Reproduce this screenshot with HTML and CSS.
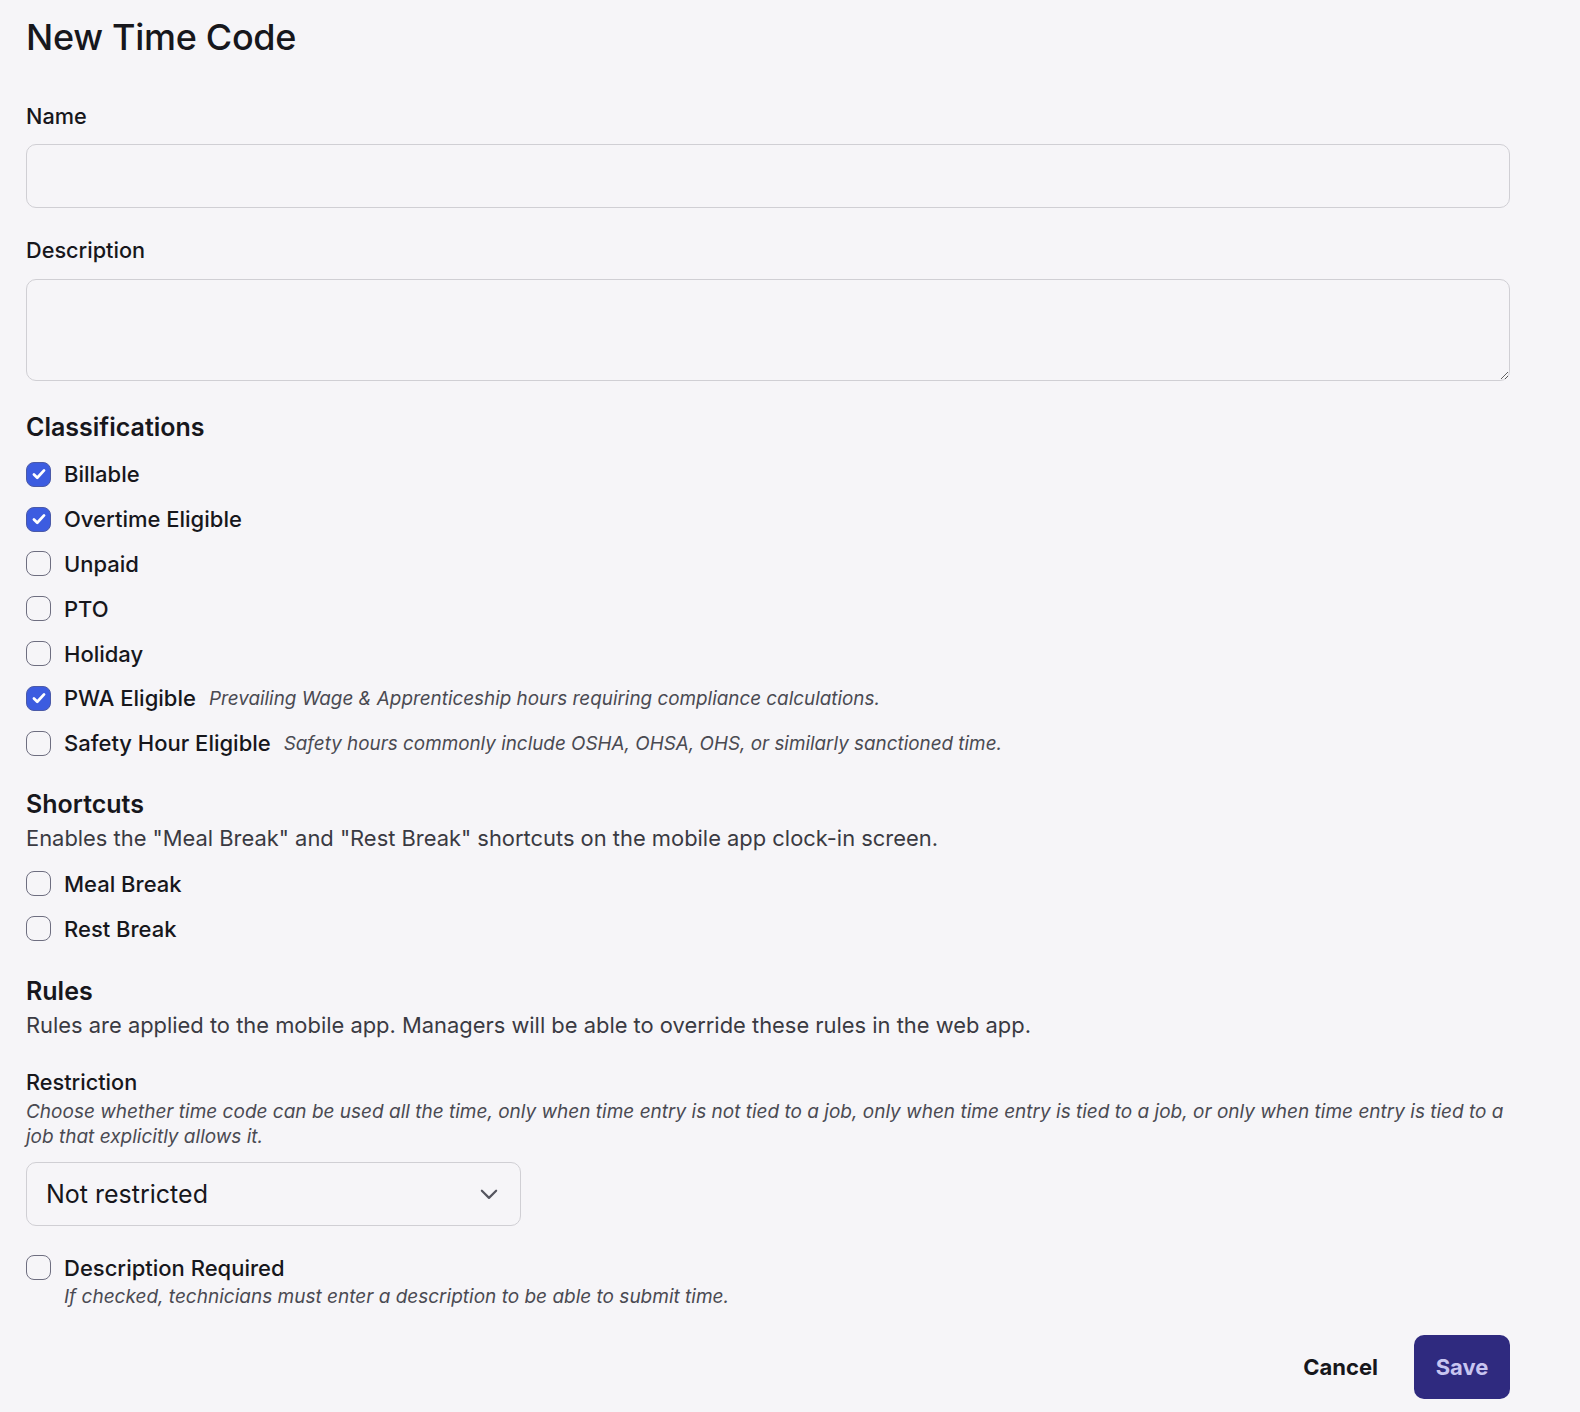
FILE: index.html
```
<!DOCTYPE html>
<html>
<head>
  <meta charset="UTF-8">
  <title>New Time Code</title>
  <link rel="stylesheet" href="styles.css">
</head>
<body>
  <div class="page">
    <h1>New Time Code</h1>

    <label class="field-label label-name" for="name">Name</label>
    <input class="text-input" type="text" id="name">

    <label class="field-label label-desc" for="desc">Description</label>
    <textarea class="text-area" id="desc"></textarea>

    <h2 class="section classifications">Classifications</h2>
    <div class="checks">
      <div class="check-row"><span class="box checked"><svg viewBox="0 0 24 24"><path d="M6.5 12.5l3.6 3.6 7.4-8"/></svg></span><span class="check-label">Billable</span></div>
      <div class="check-row"><span class="box checked"><svg viewBox="0 0 24 24"><path d="M6.5 12.5l3.6 3.6 7.4-8"/></svg></span><span class="check-label">Overtime Eligible</span></div>
      <div class="check-row"><span class="box"></span><span class="check-label">Unpaid</span></div>
      <div class="check-row"><span class="box"></span><span class="check-label">PTO</span></div>
      <div class="check-row"><span class="box"></span><span class="check-label">Holiday</span></div>
      <div class="check-row"><span class="box checked"><svg viewBox="0 0 24 24"><path d="M6.5 12.5l3.6 3.6 7.4-8"/></svg></span><span class="check-label">PWA Eligible</span><span class="hint">Prevailing Wage &amp; Apprenticeship hours requiring compliance calculations.</span></div>
      <div class="check-row"><span class="box"></span><span class="check-label">Safety Hour Eligible</span><span class="hint">Safety hours commonly include OSHA, OHSA, OHS, or similarly sanctioned time.</span></div>
    </div>

    <h2 class="section shortcuts">Shortcuts</h2>
    <p class="section-text">Enables the "Meal Break" and "Rest Break" shortcuts on the mobile app clock-in screen.</p>
    <div class="checks short-checks">
      <div class="check-row"><span class="box"></span><span class="check-label">Meal Break</span></div>
      <div class="check-row"><span class="box"></span><span class="check-label">Rest Break</span></div>
    </div>

    <h2 class="section rules">Rules</h2>
    <p class="section-text">Rules are applied to the mobile app. Managers will be able to override these rules in the web app.</p>

    <div class="field-label label-restr">Restriction</div>
    <p class="help">Choose whether time code can be used all the time, only when time entry is not tied to a job, only when time entry is tied to a job, or only when time entry is tied to a job that explicitly allows it.</p>
    <div class="select">
      <span>Not restricted</span>
      <svg class="chevron" viewBox="0 0 20 20"><path d="M3.5 7l6.5 6.5L16.5 7"/></svg>
    </div>

    <div class="req-row">
      <span class="box"></span>
      <div>
        <div class="check-label">Description Required</div>
        <div class="req-help">If checked, technicians must enter a description to be able to submit time.</div>
      </div>
    </div>

    <div class="actions">
      <button class="btn-cancel">Cancel</button>
      <button class="btn-save">Save</button>
    </div>
  </div>
</body>
</html>
```

FILE: styles.css
```
body {
  margin: 0;
  background-color: #f6f5f8;
  font-family: Inter, "Noto Sans", sans-serif;
  color: #17171c;
}
.page {
  padding: 15px 70px 0 26px;
}
h1 {
  margin: 0;
  font-size: 36px;
  line-height: 44px;
  font-weight: 500;
  letter-spacing: -0.3px;
}
.field-label {
  display: block;
  font-size: 21.7px;
  line-height: 28px;
  font-weight: 500;
}
.label-name {
  margin-top: 43px;
}
.label-desc {
  margin-top: 28px;
}
.text-input,
.text-area {
  display: block;
  box-sizing: border-box;
  width: 100%;
  margin: 14px 0 0;
  border: 1.5px solid #d0cfd4;
  border-radius: 10px;
  background-color: #f6f5f8;
  font-family: inherit;
  font-size: 21px;
}
.text-input {
  height: 64px;
}
.text-area {
  height: 102px;
  margin-top: 15px;
  resize: vertical;
}
.section {
  margin: 0;
  font-size: 25px;
  line-height: 32px;
  font-weight: 600;
}
.classifications {
  margin-top: 30px;
}
.shortcuts {
  margin-top: 22px;
}
.rules {
  margin-top: 24px;
}
.section-text {
  margin: 4px 0 0;
  font-size: 21.9px;
  line-height: 28px;
  color: #3a3a42;
}
.checks {
  margin-top: 9px;
}
.short-checks {
  margin-top: 10px;
}
.check-row {
  display: flex;
  align-items: center;
  height: 44.8px;
}
.box {
  box-sizing: border-box;
  flex: none;
  width: 25px;
  height: 25px;
  border: 1.5px solid #6e6e80;
  border-radius: 8px;
  margin-right: 13px;
  display: flex;
  align-items: center;
  justify-content: center;
}
.box.checked {
  background-color: #3c5ce0;
  border-color: #4b5aa8;
}
.box svg {
  width: 22px;
  height: 22px;
  fill: none;
  stroke: #fff;
  stroke-width: 3;
  stroke-linecap: round;
  stroke-linejoin: round;
}
.check-label {
  font-size: 22px;
  line-height: 28px;
  font-weight: 500;
}
.hint {
  margin-left: 13px;
  font-size: 18.85px;
  font-style: italic;
  color: #4a4a52;
}
.label-restr {
  margin-top: 29px;
}
.help {
  margin: 3px 0 0;
  font-size: 19px;
  line-height: 25px;
  font-style: italic;
  color: #4a4a52;
}
.select {
  box-sizing: border-box;
  width: 495px;
  height: 64px;
  margin-top: 13px;
  padding: 0 20px 0 19px;
  border: 1.5px solid #d0cfd4;
  border-radius: 10px;
  display: flex;
  align-items: center;
  justify-content: space-between;
  font-size: 25px;
}
.chevron {
  width: 22px;
  height: 22px;
  fill: none;
  stroke: #55555f;
  stroke-width: 2;
  stroke-linecap: round;
  stroke-linejoin: round;
}
.req-row {
  display: flex;
  align-items: flex-start;
  margin-top: 28px;
}
.req-row .box {
  margin-top: 1px;
}
.req-help {
  font-size: 19px;
  line-height: 25px;
  font-style: italic;
  color: #4a4a52;
  margin-top: 2px;
}
.actions {
  display: flex;
  justify-content: flex-end;
  align-items: center;
  gap: 36px;
  margin-top: 26px;
}
.actions button {
  font-family: inherit;
  font-size: 22px;
  font-weight: 700;
  border: none;
  cursor: pointer;
}
.btn-cancel {
  background: none;
  color: #17171c;
  padding: 0;
}
.btn-save {
  width: 96px;
  height: 64px;
  border-radius: 10px;
  background-color: #2f2a7f;
  color: #c8c5f0;
}
```
